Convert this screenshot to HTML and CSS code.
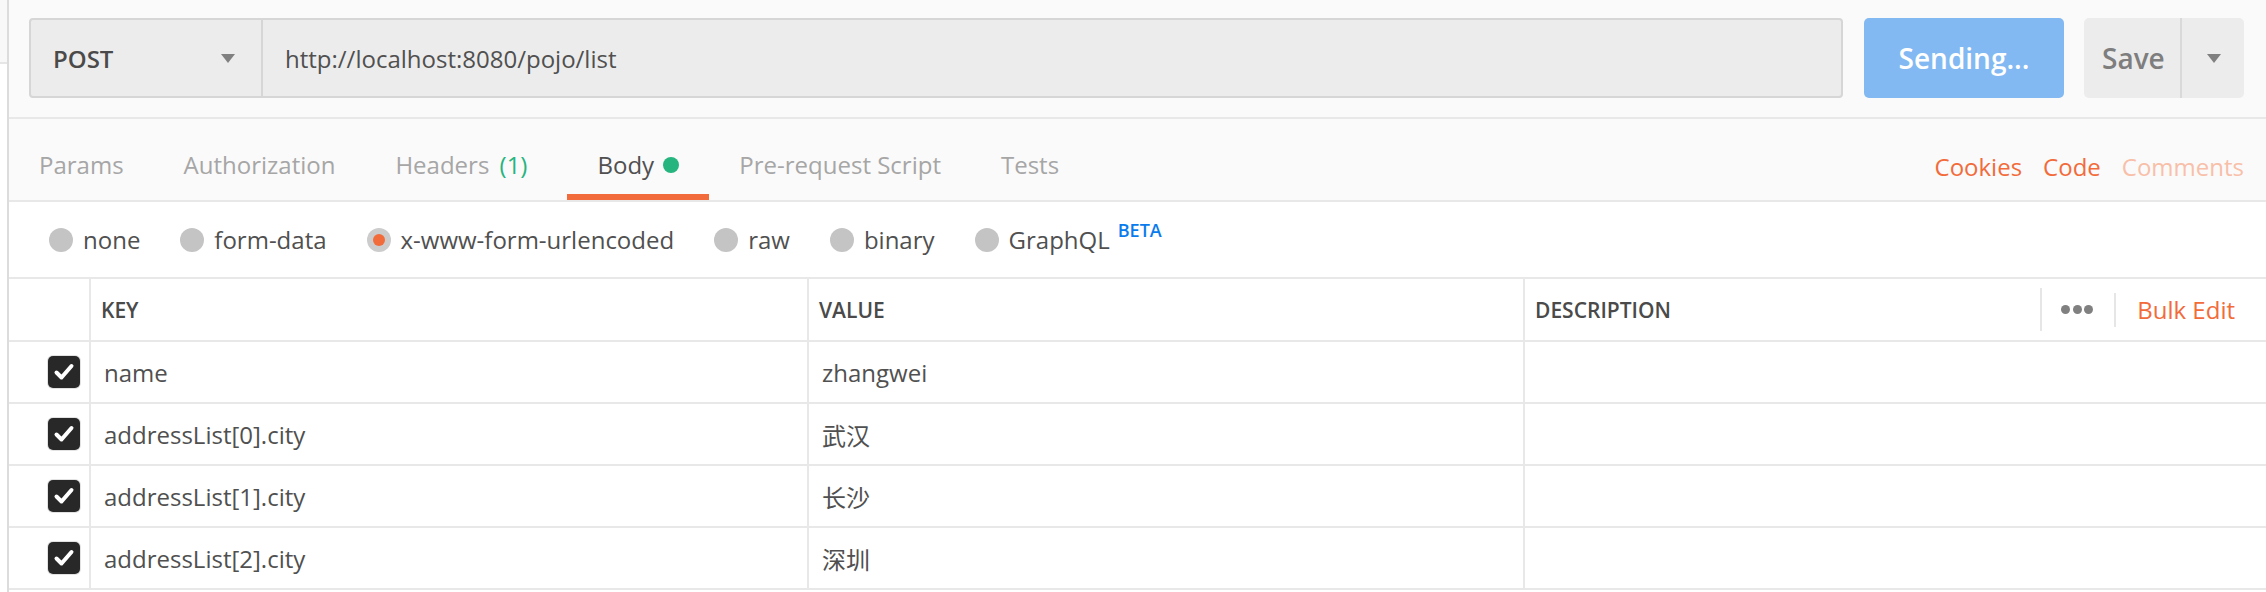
FILE: index.html
```html
<!DOCTYPE html>
<html lang="en">
<head>
<meta charset="utf-8">
<title>Postman request</title>
<link rel="stylesheet" href="styles.css">
</head>
<body>
<div class="app">
  <aside class="sidebar"><div class="sidebar-top"></div></aside>
  <main class="main">
    <div class="topbar">
      <div class="urlgroup">
        <div class="method"><span>POST</span><span class="caret"></span></div>
        <div class="url">http://localhost:8080/pojo/list</div>
      </div>
      <button class="send">Sending...</button>
      <div class="save">
        <span class="save-label">Save</span>
        <span class="save-more"><span class="caret"></span></span>
      </div>
    </div>

    <div class="tabs">
      <div class="tab">Params</div>
      <div class="tab">Authorization</div>
      <div class="tab">Headers <span class="tab-count">(1)</span></div>
      <div class="tab tab-active">Body <span class="tab-dot"></span></div>
      <div class="tab">Pre-request Script</div>
      <div class="tab">Tests</div>
      <div class="tab-links">
        <span class="link">Cookies</span>
        <span class="link">Code</span>
        <span class="link link-faded">Comments</span>
      </div>
    </div>

    <div class="bodytypes">
      <label class="radio"><span class="radio-dot"></span>none</label>
      <label class="radio"><span class="radio-dot"></span>form-data</label>
      <label class="radio"><span class="radio-dot radio-on"></span>x-www-form-urlencoded</label>
      <label class="radio"><span class="radio-dot"></span>raw</label>
      <label class="radio"><span class="radio-dot"></span>binary</label>
      <label class="radio"><span class="radio-dot"></span>GraphQL<span class="beta">BETA</span></label>
    </div>

    <div class="kv">
      <div class="kv-row kv-head">
        <div class="cell cell-check"></div>
        <div class="cell hcell">KEY</div>
        <div class="cell hcell">VALUE</div>
        <div class="cell hcell cell-last">
          <span>DESCRIPTION</span>
          <div class="head-actions">
            <span class="vdiv vdiv-tall"></span>
            <span class="dots"><i></i><i></i><i></i></span>
            <span class="vdiv vdiv-short"></span>
            <span class="bulk">Bulk Edit</span>
          </div>
        </div>
      </div>
      <div class="kv-row">
        <div class="cell cell-check"><span class="checkbox"><svg viewBox="0 0 32 32" width="32" height="32"><path d="M8.5 16.5 L13.5 21.5 L23.5 10" fill="none" stroke="#fff" stroke-width="4" stroke-linecap="round" stroke-linejoin="round"/></svg></span></div>
        <div class="cell dcell">name</div>
        <div class="cell dcell">zhangwei</div>
        <div class="cell dcell cell-last"></div>
      </div>
      <div class="kv-row">
        <div class="cell cell-check"><span class="checkbox"><svg viewBox="0 0 32 32" width="32" height="32"><path d="M8.5 16.5 L13.5 21.5 L23.5 10" fill="none" stroke="#fff" stroke-width="4" stroke-linecap="round" stroke-linejoin="round"/></svg></span></div>
        <div class="cell dcell">addressList[0].city</div>
        <div class="cell dcell">武汉</div>
        <div class="cell dcell cell-last"></div>
      </div>
      <div class="kv-row">
        <div class="cell cell-check"><span class="checkbox"><svg viewBox="0 0 32 32" width="32" height="32"><path d="M8.5 16.5 L13.5 21.5 L23.5 10" fill="none" stroke="#fff" stroke-width="4" stroke-linecap="round" stroke-linejoin="round"/></svg></span></div>
        <div class="cell dcell">addressList[1].city</div>
        <div class="cell dcell">长沙</div>
        <div class="cell dcell cell-last"></div>
      </div>
      <div class="kv-row">
        <div class="cell cell-check"><span class="checkbox"><svg viewBox="0 0 32 32" width="32" height="32"><path d="M8.5 16.5 L13.5 21.5 L23.5 10" fill="none" stroke="#fff" stroke-width="4" stroke-linecap="round" stroke-linejoin="round"/></svg></span></div>
        <div class="cell dcell">addressList[2].city</div>
        <div class="cell dcell">深圳</div>
        <div class="cell dcell cell-last"></div>
      </div>
    </div>
  </main>
</div>
</body>
</html>
```

FILE: styles.css
```css
* { box-sizing: border-box; }
html, body {
  margin: 0;
  padding: 0;
  background: #ffffff;
  overflow: hidden;
}
body {
  font-family: "Open Sans", "Noto Sans CJK SC", sans-serif;
  font-size: 24px;
  color: #505050;
  width: 2266px;
  height: 592px;
}

.app {
  display: flex;
  height: 592px;
}

.sidebar {
  width: 7px;
  flex: none;
  background: #ffffff;
}
.sidebar-top {
  height: 64px;
  background: #f8f8f8;
  border-bottom: 2px solid #e6e6e6;
}

.main {
  flex: 1;
  min-width: 0;
  border-left: 2px solid #dcdcdc;
  display: flex;
  flex-direction: column;
  overflow: hidden;
}
.main > * { flex: none; }

/* top bar */
.topbar {
  display: flex;
  align-items: stretch;
  background: #fafafa;
  padding: 18px 22px 19px 20px;
  border-bottom: 2px solid #e8e8e8;
  height: 119px;
}
.urlgroup {
  flex: 1;
  display: flex;
  background: #ececec;
  border: 2px solid #d6d6d6;
  border-radius: 4px;
  height: 80px;
}
.method {
  width: 232px;
  flex: none;
  display: flex;
  align-items: center;
  justify-content: space-between;
  padding: 0 26px 0 22px;
  border-right: 2px solid #d6d6d6;
  font-weight: 600;
  color: #4a4a4a;
}
.caret {
  width: 0;
  height: 0;
  border-left: 7.5px solid transparent;
  border-right: 7.5px solid transparent;
  border-top: 9px solid #808080;
}
.url {
  display: flex;
  align-items: center;
  padding-left: 22px;
  color: #505050;
}
.send {
  margin-left: 21px;
  width: 200px;
  height: 80px;
  border: 0;
  border-radius: 5px;
  background: #82b9f2;
  color: #ffffff;
  font-family: "Open Sans", sans-serif;
  font-size: 28px;
  font-weight: 600;
  padding: 0;
}
.save {
  margin-left: 20px;
  width: 160px;
  height: 80px;
  display: flex;
  background: #ececec;
  border-radius: 5px;
}
.save-label {
  width: 98px;
  display: flex;
  align-items: center;
  padding-left: 18px;
  font-size: 28px;
  font-weight: 600;
  color: #7e7e7e;
  border-right: 2px solid #d9d9d9;
}
.save-more {
  flex: 1;
  display: flex;
  align-items: center;
  justify-content: center;
  padding-left: 2px;
}

/* tabs */
.tabs {
  display: flex;
  align-items: flex-start;
  background: #fafafa;
  padding-top: 29px;
  border-bottom: 2px solid #e8e8e8;
  height: 83px;
}
.tab {
  display: flex;
  align-items: center;
  padding: 0 30px 13px;
  line-height: 33px;
  border-bottom: 6px solid transparent;
  color: #a6a6a6;
  white-space: pre;
}
.tab-count {
  color: #26b47f;
  margin-left: 4px;
  margin-right: 10px;
}
.tab-active {
  color: #505050;
  border-bottom-color: #f26b3a;
}
.tab-dot {
  width: 16px;
  height: 16px;
  border-radius: 50%;
  background: #26b47f;
  margin-left: 3px;
}
.tab-links {
  margin-left: auto;
  display: flex;
  gap: 21px;
  padding: 2px 22px 0 0;
  line-height: 33px;
}
.link { color: #f26b3a; }
.link-faded { color: #f8bfa9; }

/* body types */
.bodytypes {
  display: flex;
  align-items: center;
  gap: 40px;
  height: 77px;
  padding-left: 40px;
  border-bottom: 2px solid #e8e8e8;
  background: #ffffff;
}
.radio {
  display: flex;
  align-items: center;
  gap: 10px;
  line-height: 33px;
  color: #505050;
}
.radio-dot {
  width: 24px;
  height: 24px;
  border-radius: 50%;
  background: #c4c4c4;
  display: flex;
  align-items: center;
  justify-content: center;
}
.radio-on { background: #cccccc; }
.radio-on::after {
  content: "";
  width: 12px;
  height: 12px;
  border-radius: 50%;
  background: #f26b3a;
}
.beta {
  align-self: flex-start;
  margin-left: -2px;
  margin-top: -5px;
  font-size: 18px;
  font-weight: 600;
  line-height: 24px;
  color: #097bed;
}

/* key / value table */
.kv {
  display: flex;
  flex-direction: column;
}
.kv-row {
  flex: none;
  display: grid;
  grid-template-columns: 82px 718px 716px 1fr;
  height: 62px;
  border-bottom: 2px solid #e8e8e8;
}
.kv-head { height: 63px; }
.cell {
  display: flex;
  align-items: center;
  border-right: 2px solid #e8e8e8;
  min-width: 0;
}
.cell-last { border-right: 0; }
.cell-check {
  justify-content: flex-end;
  padding-right: 9px;
}
.hcell {
  padding-left: 10px;
  font-size: 21px;
  font-weight: 600;
  color: #4a4a4a;
}
.dcell {
  padding-left: 13px;
  color: #505050;
}
.checkbox {
  width: 32px;
  height: 32px;
  border-radius: 5px;
  background: #282828;
  box-shadow: 0 0 0 1px #e2e2e2;
  display: flex;
}
.head-actions {
  margin-left: auto;
  display: flex;
  align-items: center;
  padding-right: 31px;
  font-weight: 400;
}
.vdiv {
  width: 2px;
  background: #e6e6e6;
}
.vdiv-tall { height: 43px; }
.vdiv-short { height: 34px; }
.dots {
  display: flex;
  gap: 2.5px;
  margin: 0 21px 0 19px;
}
.dots i {
  width: 9px;
  height: 9px;
  border-radius: 50%;
  background: #808080;
}
.bulk {
  margin-left: 21px;
  font-size: 24px;
  color: #f26b3a;
}
```
